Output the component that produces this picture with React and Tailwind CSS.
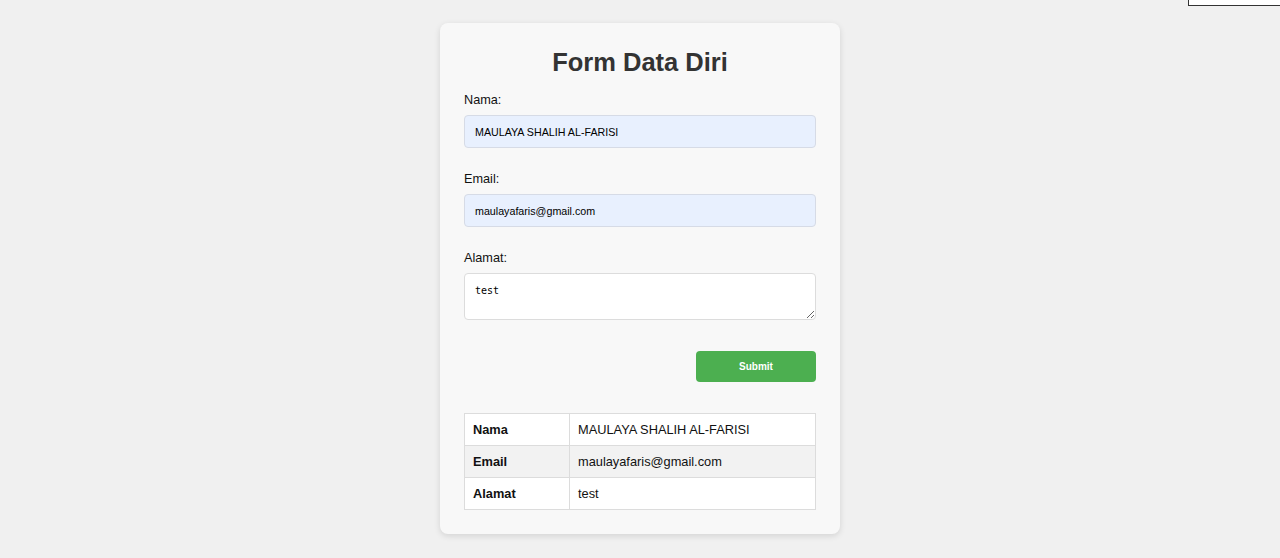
import React, { useState } from 'react';

const rows = [
  { key: 'Nama', value: 'MAULAYA SHALIH AL-FARISI' },
  { key: 'Email', value: 'maulayafaris@gmail.com' },
  { key: 'Alamat', value: 'test' },
];

export default function App() {
  const [nama, setNama] = useState('MAULAYA SHALIH AL-FARISI');
  const [email, setEmail] = useState('maulayafaris@gmail.com');
  const [alamat, setAlamat] = useState('test');

  return (
    <div className="relative min-h-[558px] bg-[#f0f0f0] font-['Liberation_Sans',Arial,sans-serif] text-[#111]">
      {/* stray box in the top-right corner */}
      <div className="absolute right-[-4px] top-[-2px] h-[8px] w-[96px] border border-[#333] bg-white" />

      <div className="flex justify-center pt-[23px]">
        <div className="w-[400px] rounded-[8px] bg-[#f8f8f8] px-[24px] pt-[23px] pb-[24px] shadow-[0_2px_6px_rgba(0,0,0,0.12)]">
          <h2 className="text-center text-[25.5px] font-bold leading-[32px] text-[#333]">Form Data Diri</h2>

          <form onSubmit={(e) => e.preventDefault()} className="mt-[14px] flex flex-col">
            <label className="text-[12.7px] leading-[17px]">Nama:</label>
            <input
              value={nama}
              onChange={(e) => setNama(e.target.value)}
              className="mt-[6px] h-[33px] w-full rounded-[4px] border border-[#d6dbe6] bg-[#e8f0fe] px-[10px] text-[10.7px] text-black outline-none"
            />

            <label className="mt-[23px] text-[12.7px] leading-[17px]">Email:</label>
            <input
              value={email}
              onChange={(e) => setEmail(e.target.value)}
              className="mt-[6px] h-[33px] w-full rounded-[4px] border border-[#d6dbe6] bg-[#e8f0fe] px-[10px] text-[10.7px] text-black outline-none"
            />

            <label className="mt-[23px] text-[12.7px] leading-[17px]">Alamat:</label>
            <textarea
              value={alamat}
              onChange={(e) => setAlamat(e.target.value)}
              className="mt-[6px] h-[47px] w-full rounded-[4px] border border-[#dcdcdc] bg-white px-[10px] py-[10px] font-['DejaVu_Sans_Mono',monospace] text-[10px] leading-[14px] text-black outline-none"
            />

            <div className="mt-[31px] flex justify-end">
              <button
                type="submit"
                className="h-[31px] w-[120px] rounded-[4px] bg-[#4caf50] text-[10px] font-bold text-white"
              >
                Submit
              </button>
            </div>
          </form>

          <table className="mt-[31px] w-full border-collapse text-[12.8px]">
            <tbody>
              {rows.map((r, i) => (
                <tr key={r.key} className={i === 1 ? 'bg-[#f2f2f2]' : 'bg-white'}>
                  <td className="h-[32px] w-[105px] border border-[#dcdcdc] px-[8px] font-bold">{r.key}</td>
                  <td className="h-[32px] border border-[#dcdcdc] px-[8px]">{r.value}</td>
                </tr>
              ))}
            </tbody>
          </table>
        </div>
      </div>
    </div>
  );
}
